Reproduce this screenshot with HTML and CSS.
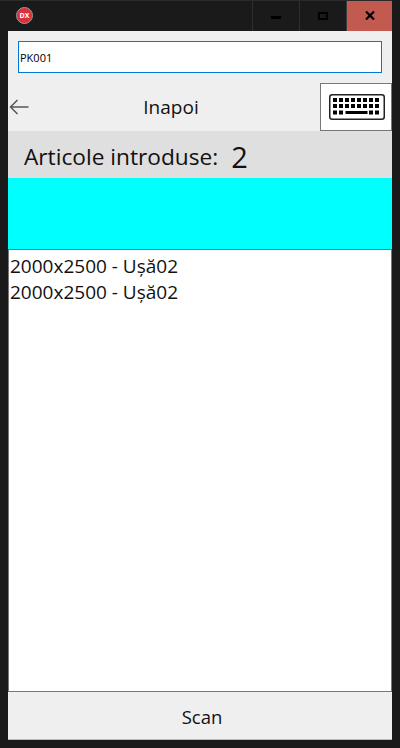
FILE: index.html
```html
<!DOCTYPE html>
<html lang="en">
<head>
    <meta charset="UTF-8">
    <title>Scan articole</title>
    <link rel="stylesheet" href="styles.css">
</head>
<body>
    <div class="window">
        <div class="titlebar">
            <div class="app-icon">DX</div>
            <div class="win-buttons">
                <div class="win-btn"><span class="min-glyph"></span></div>
                <div class="win-btn"><span class="max-glyph"></span></div>
                <div class="win-btn close-btn">
                    <svg width="10" height="9" viewBox="0 0 10 9"><path d="M1 0.5 L9 8.5 M9 0.5 L1 8.5" stroke="#000" stroke-width="2.2" fill="none"/></svg>
                </div>
            </div>
        </div>
        <div class="content">
            <div class="input-row">
                <div class="code-input">PK001</div>
            </div>
            <div class="nav-row">
                <div class="back-arrow">
                    <svg width="20" height="16" viewBox="0 0 20 16"><path d="M19.5 8 H1.5 M8.5 1 L1.5 8 L8.5 15" stroke="#555" stroke-width="1.5" fill="none"/></svg>
                </div>
                <div class="back-label">Inapoi</div>
                <div class="keyboard-btn">
                    <svg width="56" height="26" viewBox="0 0 56 26">
                        <rect x="0.75" y="0.75" width="54.5" height="24.5" rx="2.5" fill="#fff" stroke="#222" stroke-width="1.5"/>
                        <g fill="#000">
                            <rect x="4" y="4" width="4" height="4"/><rect x="10" y="4" width="4" height="4"/><rect x="16" y="4" width="4" height="4"/><rect x="22" y="4" width="4" height="4"/><rect x="28" y="4" width="4" height="4"/><rect x="34" y="4" width="4" height="4"/><rect x="40" y="4" width="4" height="4"/><rect x="46" y="4" width="4" height="4"/>
                            <rect x="4" y="10" width="4" height="4"/><rect x="10" y="10" width="4" height="4"/><rect x="16" y="10" width="4" height="4"/><rect x="22" y="10" width="4" height="4"/><rect x="28" y="10" width="4" height="4"/><rect x="34" y="10" width="4" height="4"/><rect x="40" y="10" width="4" height="4"/><rect x="46" y="10" width="4" height="4"/>
                            <rect x="4" y="16.5" width="4" height="4"/><rect x="10" y="16.5" width="4" height="4"/><rect x="16.5" y="17" width="22" height="3"/><rect x="40" y="16.5" width="4" height="4"/><rect x="46" y="16.5" width="4" height="4"/>
                        </g>
                    </svg>
                </div>
            </div>
            <div class="count-bar">
                <span class="count-label">Articole introduse:</span>
                <span class="count-value">2</span>
            </div>
            <div class="status-band"></div>
            <div class="item-list">
                <div class="item">2000x2500 - Ușă02</div>
                <div class="item">2000x2500 - Ușă02</div>
            </div>
            <div class="scan-btn">Scan</div>
        </div>
    </div>
</body>
</html>
```

FILE: styles.css
```css
html, body {
    margin: 0;
    padding: 0;
    height: 100%;
}
body {
    font-family: "Open Sans", "Noto Sans", sans-serif;
    background-color: #1a1a1a;
    color: #111;
}
.window {
    width: 400px;
    height: 748px;
    display: flex;
    flex-direction: column;
    box-sizing: border-box;
    padding: 0 8px 8px 8px;
}
.titlebar {
    height: 31px;
    display: flex;
    justify-content: space-between;
    flex-shrink: 0;
    border-top: 1px solid #2b2b2b;
    box-sizing: border-box;
    margin: 0 0 0 -8px;
}
.app-icon {
    width: 15px;
    height: 15px;
    margin: 6px 0 0 16px;
    border-radius: 50%;
    background-color: #dc2f3c;
    border: 1px solid #999;
    color: #fff;
    font-size: 7px;
    font-weight: bold;
    line-height: 15px;
    text-align: center;
}
.win-buttons {
    display: flex;
}
.win-btn {
    width: 46px;
    display: flex;
    align-items: center;
    justify-content: center;
    border-left: 1px solid #2e2e2e;
    padding-bottom: 1px;
}
.close-btn {
    background-color: #c25a50;
    width: 45px;
    border-left-color: #3a3a3a;
}
.min-glyph {
    width: 10px;
    height: 3px;
    margin-top: 4px;
    background-color: #000;
}
.max-glyph {
    width: 6px;
    height: 4px;
    border: 2px solid #000;
}
.content {
    flex: 1;
    display: flex;
    flex-direction: column;
    background-color: #efefef;
    min-height: 0;
}
.input-row {
    height: 52px;
    padding: 10px 10px 0 10px;
    box-sizing: border-box;
    flex-shrink: 0;
}
.code-input {
    height: 32px;
    box-sizing: border-box;
    border: 1px solid #0078d7;
    background-color: white;
    font-size: 11px;
    line-height: 31px;
    padding-left: 1px;
    color: #000;
}
.nav-row {
    height: 48px;
    display: flex;
    align-items: center;
    flex-shrink: 0;
}
.back-arrow {
    width: 22px;
    padding-left: 1px;
    display: flex;
    align-items: center;
}
.back-label {
    flex: 1;
    text-align: center;
    font-size: 19px;
    padding-right: 9px;
}
.keyboard-btn {
    width: 72px;
    height: 48px;
    box-sizing: border-box;
    border: 1px solid #777;
    background-color: white;
    display: flex;
    align-items: center;
    padding-left: 8px;
}
.count-bar {
    height: 47px;
    background-color: #dfdfdf;
    display: flex;
    align-items: center;
    padding: 3px 0 0 16px;
    box-sizing: border-box;
    flex-shrink: 0;
}
.count-label {
    font-size: 22.7px;
}
.count-value {
    font-size: 29px;
    margin-left: 13px;
}
.status-band {
    height: 71px;
    background-color: #00ffff;
    flex-shrink: 0;
}
.item-list {
    flex: 1;
    background-color: white;
    border-top: 1px solid #777;
    border-left: 1px solid #777;
    border-right: 1px solid #777;
    padding: 3px 0 0 1px;
}
.item {
    font-size: 19px;
    line-height: 26px;
}
.scan-btn {
    height: 49px;
    flex-shrink: 0;
    box-sizing: border-box;
    border-top: 1px solid #777;
    border-bottom: 1px solid #b8b8b8;
    text-align: center;
    font-size: 18.5px;
    line-height: 50px;
    padding-left: 4px;
}
```
